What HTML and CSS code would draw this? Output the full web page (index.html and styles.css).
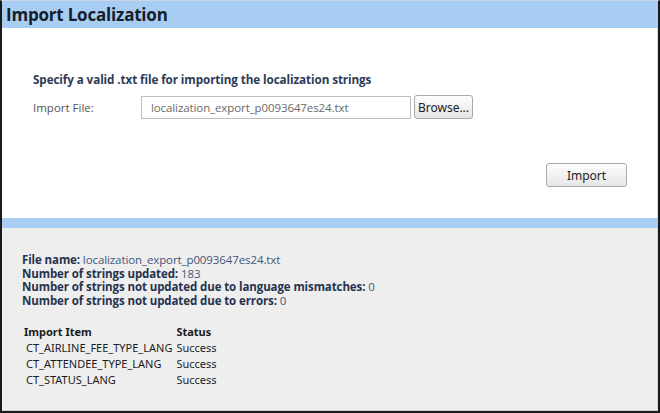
FILE: index.html
```html
<!DOCTYPE html>
<html>
<head>
<meta charset="utf-8">
<link rel="stylesheet" href="styles.css">
</head>
<body>
<div class="frame">
  <div class="header">Import Localization</div>
  <div class="main">
    <div class="intro">Specify a valid .txt file for importing the localization strings</div>
    <div class="file-row">
      <span class="file-label">Import File:</span>
      <div class="file-input">localization_export_p0093647es24.txt</div>
      <button class="btn browse">Browse...</button>
    </div>
    <div class="actions">
      <button class="btn import">Import</button>
    </div>
  </div>
  <div class="divider"></div>
  <div class="results">
    <div class="summary">
      <div><b>File name:</b> localization_export_p0093647es24.txt</div>
      <div><b>Number of strings updated:</b> 183</div>
      <div><b>Number of strings not updated due to language mismatches:</b> 0</div>
      <div><b>Number of strings not updated due to errors:</b> 0</div>
    </div>
    <table class="items">
      <tr><th>Import Item</th><th>Status</th></tr>
      <tr><td>CT_AIRLINE_FEE_TYPE_LANG</td><td>Success</td></tr>
      <tr><td>CT_ATTENDEE_TYPE_LANG</td><td>Success</td></tr>
      <tr><td>CT_STATUS_LANG</td><td>Success</td></tr>
    </table>
  </div>
</div>
</body>
</html>
```
FILE: styles.css
```css
html, body { margin: 0; padding: 0; background: #fff; }
body { font-family: "Open Sans", "Noto Sans", sans-serif; }
.frame {
  width: 660px; height: 413px; box-sizing: border-box;
  border-left: 2px solid #1a1a1a; border-right: 2px solid #1a1a1a; border-bottom: 2px solid #1a1a1a;
  border-top: 1px solid #c9d6e3;
  display: flex; flex-direction: column;
}
.header {
  height: 27px; background: #a8cdf2; box-sizing: border-box;
  padding-left: 4px; font-weight: 700; font-size: 17px; line-height: 27px; color: #15202b;
  letter-spacing: -0.2px;
}
.main { height: 190px; background: #fff; padding: 43px 0 0 31px; box-sizing: border-box; border-right: 1px solid #d8d8d8; }
.intro { font-size: 11.7px; font-weight: 700; color: #2e3b57; line-height: 16px; letter-spacing: -0.1px; }
.file-row { display: flex; align-items: center; margin-top: 8px; height: 24px; }
.file-label { width: 108px; font-size: 11.5px; color: #555; }
.file-input {
  width: 270px; height: 23px; box-sizing: border-box; border: 1px solid #bdbdbd;
  font-size: 11.5px; color: #6a6a6a; line-height: 21px; padding-left: 9px; letter-spacing: -0.1px;
}
.btn {
  font-family: "Noto Sans", sans-serif; font-size: 12px; color: #222;
  border: 1px solid #a9a9a9; border-radius: 3px; background: linear-gradient(#fdfdfd, #e6e6e6);
  box-sizing: border-box; padding: 0; cursor: default;
}
.browse { width: 59px; height: 24px; margin-left: 3px; }
.actions { display: flex; justify-content: flex-end; padding-right: 30px; margin-top: 44px; }
.import { width: 81px; height: 24px; }
.divider { height: 10px; background: #a8cdf2; }
.results { flex: 1; background: #eeeeee; padding: 25px 0 0 20px; border-right: 1px solid #d2d2d2; border-bottom: 1px solid #d2d2d2; }
.summary { font-size: 11.5px; line-height: 13.5px; color: #44557a; letter-spacing: -0.1px; }
.summary b { color: #26324e; }
.items { margin-top: 17px; border-collapse: collapse; font-family: "Noto Sans", sans-serif; font-size: 11px; color: #1c1c1c; }
.items th { text-align: left; font-weight: 700; padding: 0 2px; line-height: 16px; }
.items td { padding: 0 2px 0 4px; line-height: 16px; }
.items td + td { padding-left: 2px; }
```
